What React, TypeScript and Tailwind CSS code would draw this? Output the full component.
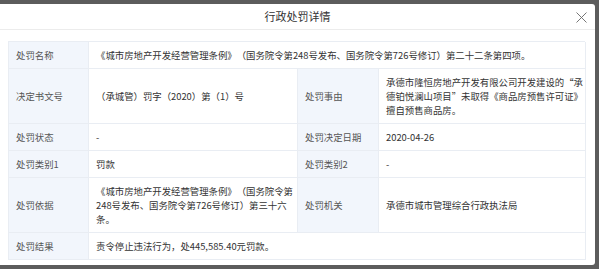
import React from "react";

type Cell = {
	label: string;
	value: React.ReactNode;
	wide?: boolean;
};

type Row = Cell[];

const rows: Row[] = [
	[
		{
			label: "处罚名称",
			value: "《城市房地产开发经营管理条例》（国务院令第248号发布、国务院令第726号修订）第二十二条第四项。",
			wide: true,
		},
	],
	[
		{ label: "决定书文号", value: "（承城管）罚字（2020）第（1）号" },
		{
			label: "处罚事由",
			value: "承德市隆恒房地产开发有限公司开发建设的“承德铂悦澜山项目”未取得《商品房预售许可证》擅自预售商品房。",
		},
	],
	[
		{ label: "处罚状态", value: "-" },
		{ label: "处罚决定日期", value: "2020-04-26" },
	],
	[
		{ label: "处罚类别1", value: "罚款" },
		{ label: "处罚类别2", value: "-" },
	],
	[
		{
			label: "处罚依据",
			value: "《城市房地产开发经营管理条例》（国务院令第248号发布、国务院令第726号修订）第三十六条。",
		},
		{ label: "处罚机关", value: "承德市城市管理综合行政执法局" },
	],
	[
		{
			label: "处罚结果",
			value: "责令停止违法行为，处445,585.40元罚款。",
			wide: true,
		},
	],
];

const LabelCell = ({ children }: { children: React.ReactNode }) => (
	<div className="bg-[#f2f6fc] text-[#555] border-r border-b border-[#e9edf3] flex items-center pl-[7px] py-[6px]">
		{children}
	</div>
);

const ValueCell = ({ children, wide }: { children: React.ReactNode; wide?: boolean }) => (
	<div
		className={`${wide ? "col-span-3" : ""} text-[#333] border-r border-b border-[#e9edf3] flex items-center pl-[7px] pr-0 py-[6px]`}
	>
		<span>{children}</span>
	</div>
);

const CloseIcon = () => (
	<svg width="11" height="11" viewBox="0 0 11 11" fill="none" stroke="#666" strokeWidth="0.9">
		<path d="M0.5 0.5 L10.5 10.5 M10.5 0.5 L0.5 10.5" />
	</svg>
);

export default function App() {
	return (
		<div
			lang="zh-CN"
			className="w-[599px] h-[269px] bg-[#5c5c5c] pt-[4px] pr-[4px] overflow-hidden"
			style={{ fontFamily: '"Noto Sans CJK SC", "Noto Sans", sans-serif' }}
		>
			<div className="w-[595px] h-[261px] bg-white rounded-r-[3px]">
				<div className="relative h-[26px] border-b border-[#ececec] flex items-center justify-center">
					<span className="text-[11px] text-[#333] leading-none">行政处罚详情</span>
					<div className="absolute right-[8px] top-[8px] flex">
						<CloseIcon />
					</div>
				</div>
				<div className="pt-[11px] pl-[8px]">
					<div className="w-[577px] grid grid-cols-[80px_209px_81px_207px] border-l border-t border-[#e9edf3] text-[9.4px] leading-[14px] [text-spacing-trim:space-all]">
						{rows.map((row, i) => (
							<React.Fragment key={i}>
								{row.map((cell) => (
									<React.Fragment key={cell.label}>
										<LabelCell>{cell.label}</LabelCell>
										<ValueCell wide={cell.wide}>{cell.value}</ValueCell>
									</React.Fragment>
								))}
							</React.Fragment>
						))}
					</div>
				</div>
			</div>
		</div>
	);
}
